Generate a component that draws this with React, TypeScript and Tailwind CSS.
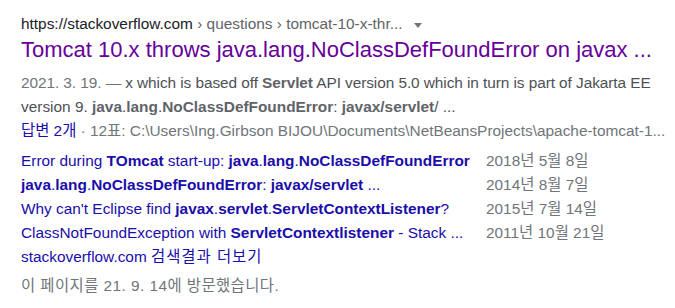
import React from 'react';

type Sitelink = { parts: [string, boolean][]; date: string };

const SITELINKS: Sitelink[] = [
  {
    parts: [
      ['Error during ', false],
      ['TOmcat', true],
      [' start-up: ', false],
      ['java', true],
      ['.', false],
      ['lang', true],
      ['.', false],
      ['NoClassDefFoundError', true],
    ],
    date: '2018년 5월 8일',
  },
  {
    parts: [
      ['java', true],
      ['.', false],
      ['lang', true],
      ['.', false],
      ['NoClassDefFoundError', true],
      [': ', false],
      ['javax/servlet', true],
      [' ...', false],
    ],
    date: '2014년 8월 7일',
  },
  {
    parts: [
      ["Why can't Eclipse find ", false],
      ['javax', true],
      ['.', false],
      ['servlet', true],
      ['.', false],
      ['ServletContextListener', true],
      ['?', false],
    ],
    date: '2015년 7월 14일',
  },
  {
    parts: [
      ['ClassNotFoundException with ', false],
      ['ServletContextlistener', true],
      [' - Stack ...', false],
    ],
    date: '2011년 10월 21일',
  },
];

const FONT = "font-['Liberation_Sans','Noto_Sans_CJK_KR',sans-serif]";

const App: React.FC = () => {
  return (
    <div className={`w-[675px] h-[308px] bg-white pl-[21px] pt-[13px] ${FONT} overflow-hidden`}>
      {/* breadcrumb */}
      <div className="flex items-center text-[15.4px] leading-[22px] h-[22px] whitespace-nowrap">
        <span className="text-[#202124]">https://stackoverflow.com</span>
        <span className="text-[#5f6368]">&nbsp;› questions › tomcat-10-x-thr...</span>
        <span className="ml-[11px] mt-[2px] w-0 h-0 border-l-[4px] border-r-[4px] border-t-[5px] border-l-transparent border-r-transparent border-t-[#70757a]" />
      </div>

      {/* title */}
      <div className="text-[22px] leading-[28px] text-[#660099] mt-[1px] whitespace-nowrap">
        Tomcat 10.x throws java.lang.NoClassDefFoundError on javax ...
      </div>

      {/* snippet */}
      <div className="text-[15.4px] leading-[24px] text-[#4d5156] mt-[7px]">
        <div className="whitespace-nowrap tracking-[-0.07px]">
          <span className="text-[#70757a]">2021. 3. 19. — </span>x which is based off <b className="text-[#5f6368]">Servlet</b> API version 5.0 which in turn is part of Jakarta EE
        </div>
        <div className="whitespace-nowrap">
          version 9. <b className="text-[#5f6368]">java</b>.<b className="text-[#5f6368]">lang</b>.<b className="text-[#5f6368]">NoClassDefFoundError</b>: <b className="text-[#5f6368]">javax/servlet</b>/ ...
        </div>
        <div className="whitespace-nowrap text-[#70757a]">
          <span className="text-[#1a0dab]">답변 2개</span> · 12표: C:\Users\Ing.Girbson BIJOU\Documents\NetBeansProjects\apache-tomcat-1...
        </div>
      </div>

      {/* sitelinks */}
      <div className="mt-[6px] grid grid-cols-[465px_1fr] text-[15.4px] leading-[24px]">
        {SITELINKS.map((s, i) => (
          <React.Fragment key={i}>
            <div className="text-[#1a0dab] whitespace-nowrap">
              {s.parts.map(([t, b], j) =>
                b ? <b key={j}>{t}</b> : <span key={j}>{t}</span>
              )}
            </div>
            <div className="text-[#70757a] whitespace-nowrap">{s.date}</div>
          </React.Fragment>
        ))}
      </div>
      <div className="text-[15.4px] leading-[24px] text-[#1a0dab] whitespace-nowrap">
        stackoverflow.com <span className="tracking-[1px]">검색결과 더보기</span>
      </div>

      <div className="text-[15.4px] leading-[24px] text-[#70757a] mt-[5px] whitespace-nowrap tracking-[0.45px]">
        이 페이지를 21. 9. 14에 방문했습니다.
      </div>
    </div>
  );
};

export default App;
